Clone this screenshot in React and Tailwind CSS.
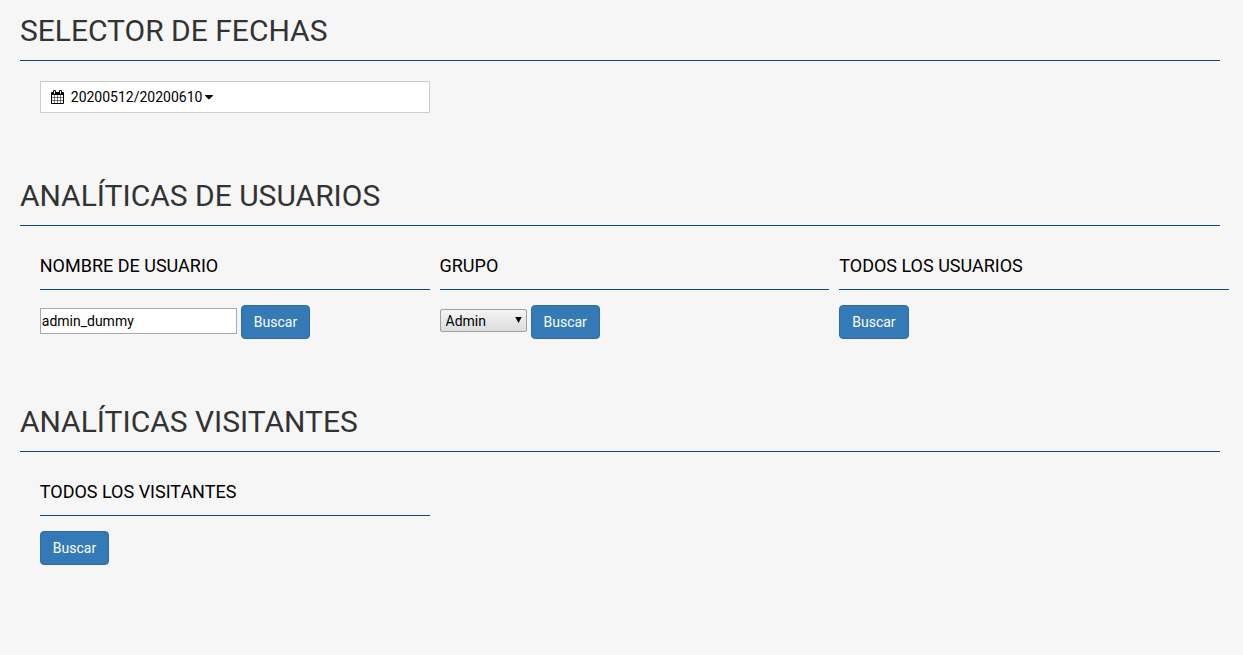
import React from "react";

function CalendarIcon() {
  return (
    <svg className="h-3.5 w-[13px] shrink-0" viewBox="0 0 1664 1792" fill="currentColor" aria-hidden="true">
      <path d="M128 1664h288v-288h-288v288zm352 0h320v-288h-320v288zm-352-352h288v-320h-288v320zm352 0h320v-320h-320v320zm-352-384h288v-288h-288v288zm736 736h320v-288h-320v288zm-384-736h320v-288h-320v288zm768 736h288v-288h-288v288zm-384-352h320v-320h-320v320zm-352-864v-288q0-13-9.5-22.5t-22.5-9.5h-64q-13 0-22.5 9.5t-9.5 22.5v288q0 13 9.5 22.5t22.5 9.5h64q13 0 22.5-9.5t9.5-22.5zm736 864h288v-320h-288v320zm-384-384h320v-288h-320v288zm384 0h288v-288h-288v288zm32-480v-288q0-13-9.5-22.5t-22.5-9.5h-64q-13 0-22.5 9.5t-9.5 22.5v288q0 13 9.5 22.5t22.5 9.5h64q13 0 22.5-9.5t9.5-22.5zm384-64v1280q0 52-38 90t-90 38h-1408q-52 0-90-38t-38-90v-1280q0-52 38-90t90-38h128v-96q0-66 47-113t113-47h64q66 0 113 47t47 113v96h384v-96q0-66 47-113t113-47h64q66 0 113 47t47 113v96h128q52 0 90 38t38 90z" />
    </svg>
  );
}

function CaretIcon() {
  return (
    <svg className="h-3.5 w-2 shrink-0" viewBox="0 0 1024 1792" fill="currentColor" aria-hidden="true">
      <path d="M1024 704q0 26-19 45l-448 448q-19 19-45 19t-45-19l-448-448q-19-19-19-45t19-45 45-19h896q26 0 45 19t19 45z" />
    </svg>
  );
}

function Section({ title, children }) {
  return (
    <section className="mb-[66px]">
      <h1 className="mr-[23px] ml-[1.6%] border-b border-[#0f4880] pb-[13px] text-[30px] leading-[33px] text-[#333333]">
        {title}
      </h1>
      <div className="mr-3.5 ml-[3.2%] grid grid-cols-3 gap-2.5">{children}</div>
    </section>
  );
}

function Column({ title, htmlFor, children }) {
  return (
    <form className="mt-[30px]" onSubmit={(e) => e.preventDefault()}>
      <h2 className="border-b border-[#0f4880] pb-[13px] text-lg leading-5">
        {htmlFor ? <label htmlFor={htmlFor}>{title}</label> : title}
      </h2>
      <div className="mt-[15px] flex items-start gap-1">{children}</div>
    </form>
  );
}

function SearchButton() {
  return (
    <button
      type="submit"
      className="rounded border border-[#2e6da4] bg-[#337ab7] px-3 py-1.5 leading-5 text-white hover:bg-[#286090]"
    >
      Buscar
    </button>
  );
}

export default function App() {
  return (
    <main className="flow-root min-h-screen bg-[#f6f6f6] pt-3.5 font-['Roboto','Liberation_Sans',sans-serif] text-sm text-black">
      <Section title="SELECTOR DE FECHAS">
        <button
          type="button"
          className="mt-5 flex items-center border border-[#cccccc] bg-white px-2.5 py-[5px] leading-5"
        >
          <CalendarIcon />
          <span className="mr-[3px] ml-[7px]">20200512/20200610</span>
          <CaretIcon />
        </button>
      </Section>

      <Section title="ANALÍTICAS DE USUARIOS">
        <Column title="NOMBRE DE USUARIO" htmlFor="username">
          <input
            id="username"
            type="text"
            defaultValue="admin_dummy"
            className="mt-[3px] h-[26px] w-[197px] border border-[#a9a9a9] bg-white px-px"
          />
          <SearchButton />
        </Column>
        <Column title="GRUPO" htmlFor="group">
          <div className="relative mt-1 flex">
            <select
              id="group"
              className="h-[23px] w-[87px] appearance-none rounded-xs border border-[#a0a0a0] bg-linear-to-b from-[#f4f4f4] to-[#dddddd] pr-5 pl-[5px] leading-5"
            >
              <option>Admin</option>
            </select>
            <svg
              className="pointer-events-none absolute top-2 right-[5px] h-1.5 w-[7px]"
              viewBox="0 0 7 6"
              aria-hidden="true"
            >
              <path d="M0.3 0H6.7L3.5 6Z" fill="black" />
            </svg>
          </div>
          <SearchButton />
        </Column>
        <Column title="TODOS LOS USUARIOS">
          <SearchButton />
        </Column>
      </Section>

      <Section title="ANALÍTICAS VISITANTES">
        <Column title="TODOS LOS VISITANTES">
          <SearchButton />
        </Column>
      </Section>
    </main>
  );
}
